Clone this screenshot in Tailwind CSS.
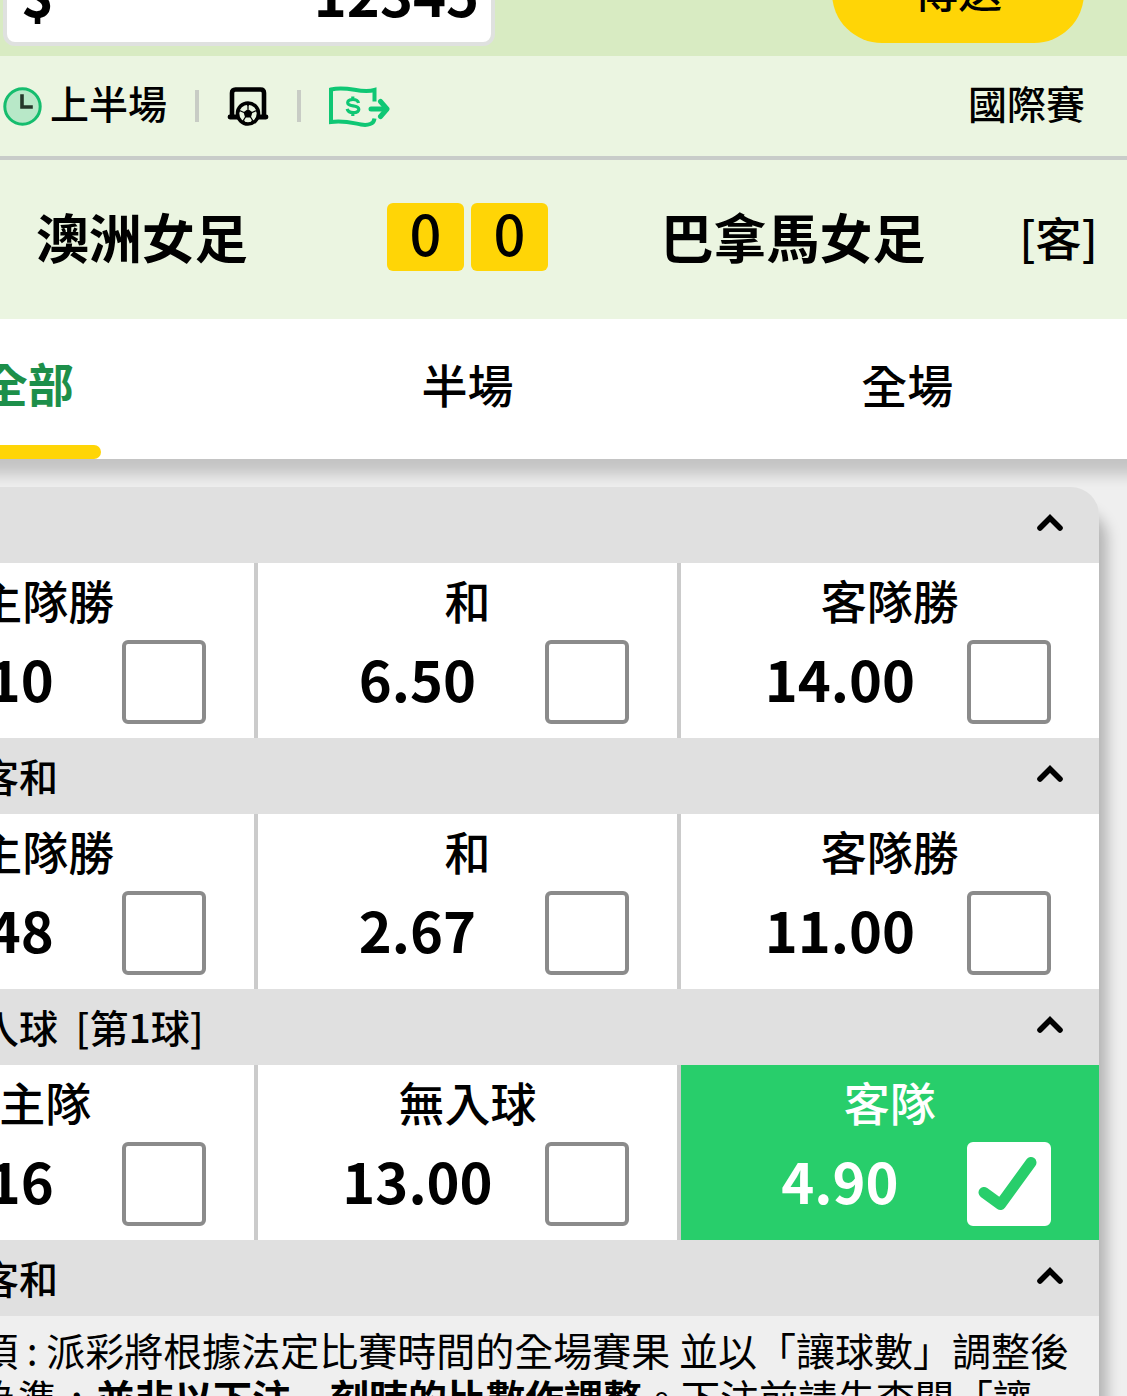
<!DOCTYPE html>
<html lang="zh-Hant">
<head>
  <meta charset="UTF-8">
  <title>澳洲女足 對 巴拿馬女足</title>
  <script src="https://cdn.jsdelivr.net/npm/@tailwindcss/browser@4"></script>
</head>
<body class="bg-[#efefef] text-black font-medium font-['Noto_Sans_CJK_TC',sans-serif] overflow-hidden">
  <div class="-ml-48 -mt-[70px]">

    <!-- Barra superior -->
    <header class="flex items-end justify-between h-[126px] bg-[#d8ebc2] pl-[195px] pr-[43px] pb-[10px]">
      <label class="flex items-center w-[492px] h-[106px] pl-[14px] pr-3 bg-white border-4 border-[#dfe1df] rounded-xl text-[56px] font-bold">
        <span>$</span>
        <input type="text" value="12345" aria-label="注額" class="flex-1 min-w-0 text-right outline-none">
      </label>
      <button class="w-[252px] h-[100px] mb-[3px] pb-2 rounded-full bg-[#ffd506] text-[44px]">傳送</button>
    </header>

    <!-- Estado del partido -->
    <div class="flex items-center h-[104px] bg-[#ebf5e1] border-b-4 border-[#c8ccc9] pl-[195px] pr-[42px] text-[39px]">
      <svg class="size-[39px]" viewBox="0 0 39 39" fill="none">
        <circle cx="19.5" cy="19.5" r="17.7" fill="#b8e8c8" stroke="#15bd6e" stroke-width="3"/>
        <path d="M19 9v11h9" stroke="#26382b" stroke-width="3.6" stroke-linecap="square"/>
      </svg>
      <span class="pl-2 pb-2">上半場</span>
      <i class="w-1 h-8 ml-[28px] bg-[#c8ccc5]"></i>
      <svg class="w-[42px] h-[40px] ml-[28px]" viewBox="0 0 42 40" fill="none" stroke="#000">
        <path d="M5 30V7q0-3.500 3.500-3.500h25q3.500 0 3.500 3.500v23" stroke-width="4.600"/>
        <path d="M3 31h8M31 31h8" stroke-width="4.800" stroke-linecap="round"/>
        <circle cx="21" cy="27.500" r="10.500" fill="#ebf5e1" stroke-width="3.600"/>
        <path d="M21 23l4.500 3.300-1.700 5.200h-5.600l-1.700-5.200z" fill="#000" stroke="none"/>
        <path d="M21 23v-4M25 26.500l4.500-2M23.500 31l2.500 4M18.500 31l-2.500 4M17 26.500l-4.500-2" stroke-width="1.300"/>
        <path d="M17.500 17.500l3.500 2.500 3.500-2.500zM31 22.500l-2 2.500 2 3zM11 22.500l2 2.500-2 3zM27.500 35.500l-3-1-1 3zM14.500 35.500l3-1 1 3z" fill="#000" stroke="none"/>
      </svg>
      <i class="w-1 h-8 ml-[28px] bg-[#c8ccc5]"></i>
      <svg class="w-[61px] h-[41px] ml-[28px]" viewBox="0 0 61 41" fill="none" stroke="#0fc774">
        <path d="M45.500 15.500V4C31 8.500 20-1 2 3.500V36c12-2 22 1 30 2.500 7 1.200 13-.500 13.500-6" stroke-width="4"/>
        <path d="M23.800 10.500v3M23.800 26.500v3.500M29.500 17c-.500-2.500-3-3.500-5.500-3.500-3 0-5.300 1-5.300 3.300 0 4.700 11.100 1.500 11.100 6.500 0 2.200-2.500 3.400-5.600 3.400-3 0-5.500-1-6-3.800" stroke-width="3.200"/>
        <path d="M42 23H57" stroke-width="5" stroke-linecap="round"/>
        <path d="M51.500 15.500l6.500 7.500-6.500 7.500" stroke-width="5" stroke-linecap="round" stroke-linejoin="round"/>
      </svg>
      <span class="ml-auto pb-2">國際賽</span>
    </div>

    <!-- Marcador -->
    <div class="flex items-center h-[159px] bg-[#ebf5e1] px-[29px] pb-1.5 text-[46px]">
      <span>[主]</span>
      <h2 class="flex-1 text-center text-[53px] font-bold">澳洲女足</h2>
      <div class="flex gap-[7px] mx-[19px] text-[56px]">
        <span class="flex items-center justify-center w-[77px] h-[68px] pb-2.5 rounded-md bg-[#ffd506]">0</span>
        <span class="flex items-center justify-center w-[77px] h-[68px] pb-2.5 rounded-md bg-[#ffd506]">0</span>
      </div>
      <h2 class="flex-1 text-center text-[53px] font-bold">巴拿馬女足</h2>
      <span>[客]</span>
    </div>

    <!-- Pestañas -->
    <nav class="grid grid-cols-3 h-[140px] -mr-4 pr-4 bg-white text-[46px] shadow-[0_16px_14px_rgba(0,0,0,0.18)]">
      <button class="flex flex-col items-center font-bold text-[#1d8f4a]">
        <span class="flex-1 flex items-center">全部</span>
        <i class="w-[146px] h-[14px] rounded-full bg-[#ffd506]"></i>
      </button>
      <button class="pb-3">半場</button>
      <button class="pb-3">全場</button>
    </nav>

    <main class="mx-7 mt-7 rounded-tr-[28px] bg-[#efefef] shadow-[8px_24px_14px_rgba(0,0,0,0.25)]">
      <div id="markets" class="rounded-t-[28px] overflow-hidden"></div>
      <p class="px-[26px] pt-[10px] pb-4 text-[39px] leading-[47px] font-normal">注意事項 : 派彩將根據法定比賽時間的全場賽果 並以「讓球數」調整後之賽果為準，<b>並非以下注一刻時的比數作調整</b>。下注前請先查閱「讓<span class="whitespace-nowrap">球數」。</span></p>
    </main>
  </div>

  <script>
    const markets = [
      { name: '主客和', options: [['主隊勝', '1.10'], ['和', '6.50'], ['客隊勝', '14.00']] },
      { name: '半場主客和', options: [['主隊勝', '1.48'], ['和', '2.67'], ['客隊勝', '11.00']] },
      { name: '下一隊入球&nbsp; [第1球]', options: [['主隊', '1.16'], ['無入球', '13.00'], ['客隊', '4.90', true]] },
      { name: '讓球主客和', options: [] }
    ];

    function renderOption([label, odds, checked]) {
      return `
        <label class="flex-1 h-[175px] bg-white border-r-4 border-[#cbcbcb] last:border-r-0 has-[:checked]:bg-[#28ce6b] has-[:checked]:text-white">
          <span class="block h-[77px] text-center text-[46px] leading-[72px]">${label}</span>
          <span class="flex pr-12">
            <span class="flex-1 pl-8 text-center text-[56px] leading-[76px] font-bold">${odds}</span>
            <span class="relative size-[84px]">
              <input type="checkbox" ${checked ? 'checked' : ''} class="peer block appearance-none size-[84px] rounded-md bg-white border-4 border-[#8b8b8b] checked:border-white">
              <svg class="absolute inset-0 hidden peer-checked:block pointer-events-none" viewBox="0 0 84 84" fill="none" stroke="#28ce6b" stroke-width="11" stroke-linecap="round" stroke-linejoin="round">
                <path d="M17 50.500l16.500 12L64 20.500"/>
              </svg>
            </span>
          </span>
        </label>`;
    }

    document.getElementById('markets').innerHTML = markets.map(market => `
      <button class="flex items-center justify-between w-full h-[76px] pl-[27px] pr-[35px] pb-0.5 bg-[#e0e0e0] text-[39px]">
        <span>${market.name}</span>
        <svg class="w-7 h-5 mb-0.5" viewBox="0 0 28 20" fill="none" stroke="#000" stroke-width="5.600" stroke-linecap="round">
          <path d="M4 15L14 5l10 10"/>
        </svg>
      </button>
      <div class="flex">${market.options.map(renderOption).join('')}</div>`).join('');
  </script>
</body>
</html>
